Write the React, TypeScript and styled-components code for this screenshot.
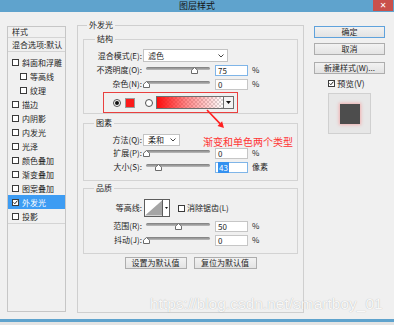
import React from "react";
import styled, { createGlobalStyle } from "styled-components";

const GlobalStyle = createGlobalStyle`
  html, body { margin: 0; padding: 0; background: #f0f0f0; }
  body {
    font-family: "Noto Sans CJK SC", "Noto Sans", sans-serif;
    font-size: 8px;
    color: #1e1e1e;
  }
  * { box-sizing: border-box; }
`;

const Window = styled.div`
  position: relative;
  width: 394px;
  height: 325px;
  overflow: hidden;
  display: flex;
  flex-direction: column;
  background: #f0f0f0;
`;

const TitleBar = styled.div`
  height: 12px;
  flex: none;
  background: #5fa3cd;
  display: grid;
  grid-template-columns: 1fr auto 1fr;
  align-items: start;
`;

const Title = styled.div`
  grid-column: 2;
  font-size: 9px;
  line-height: 12px;
  color: #151515;
`;

const CloseBtn = styled.div`
  justify-self: end;
  width: 20px;
  height: 11px;
  margin-right: 1px;
  background: #c9504b;
  color: #fff;
  font-family: "DejaVu Sans", sans-serif;
  font-size: 8px;
  line-height: 11px;
  text-align: center;
`;

const Body = styled.div`
  flex: 1;
  display: flex;
  align-items: flex-start;
`;

const BottomFrame = styled.div`
  flex: none;
  height: 3px;
  background: #5fa3cd;
`;

const BottomGap = styled.div`
  flex: none;
  height: 3px;
  background: #e4e4e4;
`;

/* ---------- left style list ---------- */
const StylePanel = styled.div`
  margin: 14px 0 0 7px;
  width: 59px;
  height: 286px;
  flex: none;
  border: 1px solid #c6c6c6;
  display: flex;
  flex-direction: column;
`;

const PanelHeader = styled.div`
  height: 11px;
  line-height: 10px;
  padding-left: 4px;
  border-bottom: 1px solid #d4d4d4;
`;

const BlendRow = styled.div`
  height: 14px;
  line-height: 13px;
  padding-left: 4px;
  border-bottom: 1px solid #d4d4d4;
  white-space: nowrap;
`;

const LayerList = styled.div`
  padding-top: 3px;
  border-bottom: 1px solid #d4d4d4;
`;

const LayerItem = styled.div<{ $indent?: boolean; $active?: boolean }>`
  height: 14px;
  display: flex;
  align-items: center;
  gap: 3px;
  padding-left: ${(p) => (p.$indent ? 12 : 4)}px;
  background: ${(p) => (p.$active ? "#3d9cf3" : "transparent")};
  color: ${(p) => (p.$active ? "#ffffff" : "#1e1e1e")};
  white-space: nowrap;
  overflow: hidden;
`;

const CheckBox = styled.span`
  width: 7px;
  height: 7px;
  flex: none;
  border: 1px solid #3a3a3a;
  background: #fff;
  display: inline-flex;
  align-items: center;
  justify-content: center;
`;

const Check = ({ checked }: { checked?: boolean }) => (
  <CheckBox>
    {checked && (
      <svg width="7" height="7" viewBox="0 0 7 7">
        <path d="M0.8 3.4 L2.6 5.2 L6.2 0.9" fill="none" stroke="#111" strokeWidth="1.3" />
      </svg>
    )}
  </CheckBox>
);

/* ---------- group boxes ---------- */
const OuterGroup = styled.fieldset`
  margin: 8px 0 0 11px;
  padding: 0 5px;
  width: 227px;
  height: 293px;
  flex: none;
  border: 1px solid #cfcfcf;
  display: flex;
  flex-direction: column;
  min-width: 0;
`;

const Section = styled.fieldset<{ $top: number; $pt: number; $pb: number }>`
  margin: ${(p) => p.$top}px 0 0 0;
  padding: ${(p) => p.$pt}px 0 ${(p) => p.$pb}px 0;
  border: 1px solid #d3d3d3;
  display: flex;
  flex-direction: column;
  min-width: 0;
`;

const Legend = styled.legend<{ $offset: number }>`
  margin-left: ${(p) => p.$offset}px;
  padding: 0 2px;
  font-size: 8px;
  line-height: 10px;
`;

const FieldRow = styled.div<{ $h?: number; $mt?: number }>`
  display: flex;
  align-items: center;
  height: ${(p) => p.$h ?? 14}px;
  margin-top: ${(p) => p.$mt ?? 0}px;
  flex: none;
`;

const Label = styled.span`
  width: 58px;
  flex: none;
  text-align: right;
  white-space: nowrap;
  line-height: 10px;
`;

const SelectBox = styled.div<{ $w: number; $h: number }>`
  margin-left: 1px;
  width: ${(p) => p.$w}px;
  height: ${(p) => p.$h}px;
  background: #fff;
  border: 1px solid #c3c3c3;
  display: flex;
  align-items: center;
  justify-content: space-between;
  padding: 0 3px 0 4px;
  line-height: 10px;
`;

const Chevron = () => (
  <svg width="6" height="4" viewBox="0 0 6 4">
    <polyline points="0.5,0.5 3,3 5.5,0.5" fill="none" stroke="#444" strokeWidth="1" />
  </svg>
);

const SliderWrap = styled.div`
  position: relative;
  width: 64px;
  height: 14px;
  margin-left: 4px;
  flex: none;
`;

const Track = styled.div`
  position: absolute;
  left: 0;
  right: 0;
  top: 4px;
  height: 3px;
  border-radius: 2px;
  background: linear-gradient(#7b7b7b, #bcbcbc);
`;

const Thumb = styled.svg`
  position: absolute;
  top: 4px;
  width: 7px;
  height: 7px;
  margin-left: -3.5px;
`;

const Slider = ({ pos }: { pos: number }) => (
  <SliderWrap>
    <Track />
    <Thumb viewBox="0 0 7 7" style={{ left: `${pos * 100}%` }}>
      <path d="M3.5 0.5 L6.5 3.2 L6.5 6.5 L0.5 6.5 L0.5 3.2 Z" fill="#fff" stroke="#6a6a6a" strokeWidth="1" />
    </Thumb>
  </SliderWrap>
);

const NumInput = styled.div<{ $focus?: boolean }>`
  width: 33px;
  height: 11px;
  margin-left: 5px;
  flex: none;
  background: #fff;
  border: 1px solid ${(p) => (p.$focus ? "#7fb5e8" : "#c6c6c6")};
  line-height: 9px;
  padding-left: 2px;
  font-size: 8px;
`;

const Selected = styled.span`
  background: #3390f0;
  color: #fff;
  padding: 0 1px;
`;

const Unit = styled.span`
  margin-left: 4px;
  line-height: 10px;
`;

/* ---------- color choice row ---------- */
const ColorChoice = styled.div`
  margin: 1px 0 0 19px;
  width: 135px;
  height: 21px;
  flex: none;
  border: 1px solid #e9403f;
  display: flex;
  align-items: center;
  padding-left: 9px;
`;

const Radio = styled.span<{ $checked?: boolean; $ml?: number }>`
  width: 8px;
  height: 8px;
  flex: none;
  margin-left: ${(p) => p.$ml ?? 0}px;
  border: 1px solid #505050;
  border-radius: 50%;
  background: #fff;
  display: inline-flex;
  align-items: center;
  justify-content: center;
  &::after {
    content: "";
    width: 4px;
    height: 4px;
    border-radius: 50%;
    background: ${(p) => (p.$checked ? "#111" : "transparent")};
  }
`;

const Swatch = styled.span`
  width: 10px;
  height: 10px;
  margin-left: 4px;
  flex: none;
  background: #fb1b1b;
  border: 1px solid #9a9a9a;
`;

const GradientBox = styled.div`
  width: 78px;
  height: 13px;
  margin-left: 3px;
  flex: none;
  border: 1px solid #6e6e6e;
  display: flex;
`;

const GradientFill = styled.div`
  flex: 1;
  background: linear-gradient(to right, #ff0d0d 0%, rgba(255, 40, 40, 0.55) 45%, rgba(255, 80, 80, 0) 100%),
    repeating-conic-gradient(#d9d9d9 0 25%, #ffffff 0 50%) 0 0 / 4px 4px;
`;

const DropBtn = styled.div`
  width: 10px;
  flex: none;
  border-left: 1px solid #6e6e6e;
  background: #f4f4f4;
  display: flex;
  align-items: center;
  justify-content: center;
`;

const DownTriangle = () => (
  <svg width="5" height="3" viewBox="0 0 5 3">
    <polygon points="0,0 5,0 2.5,3" fill="#111" />
  </svg>
);

/* ---------- contour ---------- */
const Contour = styled.div`
  margin-left: 2px;
  width: 26px;
  height: 18px;
  flex: none;
  border: 1px solid #5c5c5c;
  display: flex;
  background: #fff;
`;

const ContourStrip = styled.div`
  width: 7px;
  flex: none;
  border-left: 1px solid #5c5c5c;
  display: flex;
  align-items: center;
  justify-content: center;
`;

const AntiAlias = styled.div`
  display: flex;
  align-items: center;
  gap: 2px;
  margin-left: 8px;
  line-height: 10px;
`;

/* ---------- buttons ---------- */
const ButtonRow = styled.div`
  margin-top: 3px;
  display: flex;
  justify-content: center;
  gap: 7px;
`;

const Button = styled.div<{ $w?: number; $default?: boolean; $mt?: number }>`
  width: ${(p) => (p.$w ? `${p.$w}px` : "auto")};
  height: 12px;
  margin-top: ${(p) => p.$mt ?? 0}px;
  flex: none;
  border: 1px solid ${(p) => (p.$default ? "#5fa2dc" : "#adadad")};
  background: linear-gradient(#f2f2f2, #e3e3e3);
  text-align: center;
  line-height: 10px;
  font-size: 8px;
  white-space: nowrap;
`;

/* ---------- right side ---------- */
const SideColumn = styled.div`
  margin: 14px 0 0 10px;
  width: 71px;
  flex: none;
  display: flex;
  flex-direction: column;
`;

const PreviewToggle = styled.div`
  margin-top: 4px;
  height: 10px;
  padding-left: 14px;
  display: flex;
  align-items: center;
  gap: 2px;
  line-height: 10px;
  font-size: 8.5px;
`;

const PreviewBox = styled.div`
  margin: 5px 0 0 14px;
  width: 43px;
  height: 41px;
  background: #e7e7e7;
  border: 1px solid #d0d0d0;
  display: flex;
  align-items: center;
  justify-content: center;
`;

const PreviewSquare = styled.div`
  width: 20px;
  height: 20px;
  background: #4d4d4d;
  box-shadow: 0 0 3px 1px rgba(255, 110, 110, 0.45);
`;

/* ---------- overlays ---------- */
const ArrowSvg = styled.svg`
  position: absolute;
  left: 203px;
  top: 107px;
  width: 25px;
  height: 25px;
`;

const Annotation = styled.div`
  position: absolute;
  left: 203px;
  top: 137px;
  font-size: 10px;
  line-height: 10px;
  color: #ff3434;
  white-space: nowrap;
`;

const Watermark = styled.div`
  position: absolute;
  left: 150px;
  top: 296px;
  font-family: "Liberation Sans", Arial, sans-serif;
  font-size: 15.5px;
  line-height: 16px;
  color: rgba(255, 255, 255, 0.92);
  text-shadow: 0 0 1px rgba(0, 0, 0, 0.3);
  white-space: nowrap;
`;

const layers: { name: string; indent?: boolean; checked?: boolean; active?: boolean }[] = [
  { name: "斜面和浮雕" },
  { name: "等高线", indent: true },
  { name: "纹理", indent: true },
  { name: "描边" },
  { name: "内阴影" },
  { name: "内发光" },
  { name: "光泽" },
  { name: "颜色叠加" },
  { name: "渐变叠加" },
  { name: "图案叠加" },
  { name: "外发光", checked: true, active: true },
  { name: "投影" },
];

export default function App() {
  return (
    <>
      <GlobalStyle />
      <Window>
        <TitleBar>
          <Title>图层样式</Title>
          <CloseBtn>✕</CloseBtn>
        </TitleBar>
        <Body>
          <StylePanel>
            <PanelHeader>样式</PanelHeader>
            <BlendRow>混合选项:默认</BlendRow>
            <LayerList>
              {layers.map((l) => (
                <LayerItem key={l.name} $indent={l.indent} $active={l.active}>
                  <Check checked={l.checked} />
                  <span>{l.name}</span>
                </LayerItem>
              ))}
            </LayerList>
          </StylePanel>

          <OuterGroup>
            <Legend $offset={4}>外发光</Legend>

            <Section $top={4} $pt={5} $pb={0}>
              <Legend $offset={11}>结构</Legend>
              <FieldRow $h={13}>
                <Label>混合模式(E):</Label>
                <SelectBox $w={85} $h={13}>
                  <span>滤色</span>
                  <Chevron />
                </SelectBox>
              </FieldRow>
              <FieldRow $mt={1}>
                <Label>不透明度(O):</Label>
                <Slider pos={0.75} />
                <NumInput $focus>75</NumInput>
                <Unit>%</Unit>
              </FieldRow>
              <FieldRow>
                <Label>杂色(N):</Label>
                <Slider pos={0} />
                <NumInput>0</NumInput>
                <Unit>%</Unit>
              </FieldRow>
              <ColorChoice>
                <Radio $checked />
                <Swatch />
                <Radio $ml={10} />
                <GradientBox>
                  <GradientFill />
                  <DropBtn>
                    <DownTriangle />
                  </DropBtn>
                </GradientBox>
              </ColorChoice>
            </Section>

            <Section $top={4} $pt={5} $pb={6}>
              <Legend $offset={10}>图素</Legend>
              <FieldRow $h={13}>
                <Label>方法(Q):</Label>
                <SelectBox $w={37} $h={12}>
                  <span>柔和</span>
                  <Chevron />
                </SelectBox>
              </FieldRow>
              <FieldRow>
                <Label>扩展(P):</Label>
                <Slider pos={0} />
                <NumInput>0</NumInput>
                <Unit>%</Unit>
              </FieldRow>
              <FieldRow>
                <Label>大小(S):</Label>
                <Slider pos={0.2} />
                <NumInput $focus>
                  <Selected>43</Selected>
                </NumInput>
                <Unit>像素</Unit>
              </FieldRow>
            </Section>

            <Section $top={2} $pt={6} $pb={6}>
              <Legend $offset={10}>品质</Legend>
              <FieldRow $h={18}>
                <Label>等高线:</Label>
                <Contour>
                  <svg width="18" height="16" viewBox="0 0 18 16">
                    <polygon points="0,16 18,0 18,16" fill="#a5a5a5" />
                  </svg>
                  <ContourStrip>
                    <svg width="3" height="2" viewBox="0 0 3 2">
                      <polygon points="0,0 3,0 1.5,2" fill="#111" />
                    </svg>
                  </ContourStrip>
                </Contour>
                <AntiAlias>
                  <Check />
                  <span>消除锯齿(L)</span>
                </AntiAlias>
              </FieldRow>
              <FieldRow $mt={2}>
                <Label>范围(R):</Label>
                <Slider pos={0.5} />
                <NumInput>50</NumInput>
                <Unit>%</Unit>
              </FieldRow>
              <FieldRow>
                <Label>抖动(J):</Label>
                <Slider pos={0} />
                <NumInput>0</NumInput>
                <Unit>%</Unit>
              </FieldRow>
            </Section>

            <ButtonRow>
              <Button $w={62}>设置为默认值</Button>
              <Button $w={63}>复位为默认值</Button>
            </ButtonRow>
          </OuterGroup>

          <SideColumn>
            <Button $default>确定</Button>
            <Button $mt={5}>取消</Button>
            <Button $mt={7}>新建样式(W)...</Button>
            <PreviewToggle>
              <Check checked />
              <span>预览(V)</span>
            </PreviewToggle>
            <PreviewBox>
              <PreviewSquare />
            </PreviewBox>
          </SideColumn>
        </Body>
        <BottomFrame />
        <BottomGap />

        <ArrowSvg viewBox="0 0 25 25">
          <line x1="4" y1="3" x2="17" y2="16.6" stroke="#ff2020" strokeWidth="1.6" />
          <polygon points="21,21 14.5,18.9 19.1,14.3" fill="#ff2020" />
        </ArrowSvg>
        <Annotation>渐变和单色两个类型</Annotation>
        <Watermark>https://blog.csdn.net/smartboy_01</Watermark>
      </Window>
    </>
  );
}
